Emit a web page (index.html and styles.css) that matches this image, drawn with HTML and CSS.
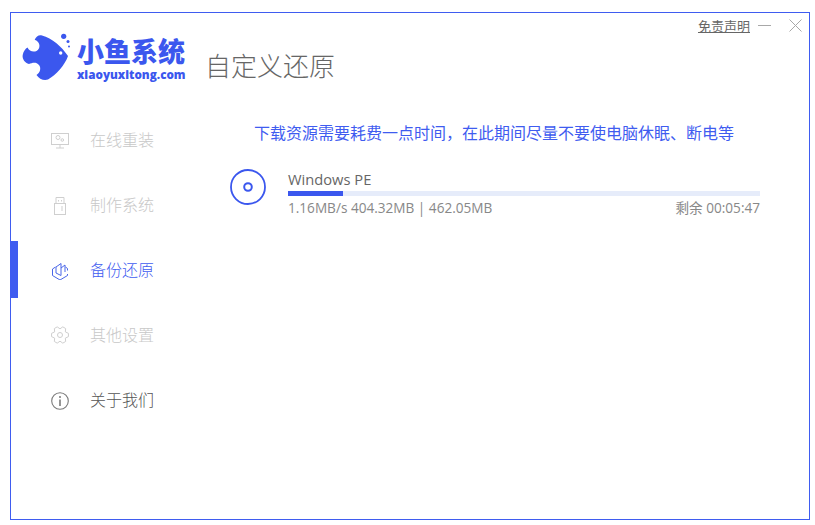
FILE: index.html
```html
<!DOCTYPE html>
<html lang="zh-CN">
<head>
<meta charset="utf-8">
<title>小鱼系统</title>
<link rel="stylesheet" href="styles.css">
</head>
<body>
<div class="window">
  <div class="topbar">
    <a class="disclaimer">免责声明</a>
    <svg class="win-btn min" width="13" height="13" viewBox="0 0 13 13"><path d="M0 6.500H13" stroke="#a8a8a8" stroke-width="1"/></svg>
    <svg class="win-btn close" width="13" height="13" viewBox="0 0 13 13"><path d="M.5.5l12 12M12.500.5l-12 12" stroke="#a8a8a8" stroke-width="1" fill="none"/></svg>
  </div>
  <header class="header">
    <svg class="fish" width="48" height="50" viewBox="0 0 48 50">
      <path fill="#3b57ee" d="M12.700 6.700C14 3.500 17 1.500 20 2.500C30 5 40 14 46 23C43 32 34 42 26 46.500C22 48 17 46 14.500 42C18 40 19.500 35 17 32C14 28.500 10 30 7 31C3 30 0 26 .7 22C1.500 18 3.500 15.500 5.500 14.500C7 18 11 19.500 14.500 18C18.500 16 19 9 12.700 6.700Z"/>
      <circle cx="41.700" cy="3.300" r="2.600" fill="#3b57ee"/>
      <circle cx="46" cy="8.500" r="1.500" fill="#3b57ee"/>
      <circle cx="47" cy="13.500" r="1" fill="#3b57ee"/>
      <circle cx="38.700" cy="20" r="1.700" fill="#fff"/>
    </svg>
    <div class="brand">
      <div class="brand-name">小鱼系统</div>
      <div class="brand-url">xiaoyuxitong.com</div>
    </div>
    <h1 class="page-title">自定义还原</h1>
  </header>
  <div class="body">
    <nav class="sidebar">
      <div class="nav-item muted">
        <svg class="nav-icon" width="18" height="18" viewBox="0 0 18 18" fill="none" stroke="#cfcfcf"><rect x=".5" y="2.500" width="17" height="11"/><circle cx="7" cy="6.500" r="2"/><circle cx="11.300" cy="9" r="1.300"/><path d="M9 13.500V17M5 17H13"/></svg>
        <span>在线重装</span>
      </div>
      <div class="nav-item muted">
        <svg class="nav-icon" width="18" height="20" viewBox="0 0 18 20" fill="none" stroke="#cfcfcf"><rect x="3.500" y="8.500" width="11" height="11"/><path d="M5 8.500V2.500H13V8.500M7.500 5V6.500M10.500 5V6.500M11 11V16"/></svg>
        <span>制作系统</span>
      </div>
      <div class="nav-item active">
        <svg class="nav-icon icon-wide" width="20" height="20" viewBox="0 0 20 20" fill="none" stroke="#4a66e8" stroke-width="1"><path d="M5.500 7L2.500 9V15.500L10 20L17.500 15.500V14M17.500 10.500V8.500L15.500 7"/><path d="M6 13V7L11 3.500V15.500L6 13ZM11 8L15 5V12"/></svg>
        <span>备份还原</span>
      </div>
      <div class="nav-item muted">
        <svg class="nav-icon" width="18" height="18" viewBox="0 0 18 18" fill="none" stroke="#cfcfcf"><path d="M17.440 7.360V10.640L14.370 12.100L14.640 15.490L11.800 17.130L9 15.200L6.200 17.130L3.360 15.490L3.630 12.100L.56 10.640V7.360L3.630 5.900L3.360 2.510L6.200 .87L9 2.800L11.800 .87L14.640 2.510L14.370 5.900Z" stroke-linejoin="round"/><circle cx="9" cy="9" r="2.500"/></svg>
        <span>其他设置</span>
      </div>
      <div class="nav-item about">
        <svg class="nav-icon icon-low" width="18" height="18" viewBox="0 0 18 18" fill="none" stroke="#7a7a7a"><circle cx="9" cy="9" r="8.300" stroke-width="1.100"/><path d="M9 7.500V14" stroke-width="1.600"/><circle cx="9" cy="4.900" r="1" fill="#7a7a7a" stroke="none"/></svg>
        <span>关于我们</span>
      </div>
    </nav>
    <main class="content">
      <p class="notice">下载资源需要耗费一点时间，在此期间尽量不要使电脑休眠、断电等</p>
      <div class="task">
        <svg class="disc" width="36" height="36" viewBox="0 0 36 36" fill="none" stroke="#3b57ee"><circle cx="18" cy="18" r="17" stroke-width="1.800"/><circle cx="18" cy="18" r="3.800" stroke-width="2"/></svg>
        <div class="task-info">
          <div class="task-name">Windows PE</div>
          <div class="track"><div class="fill" style="width:11.700%"></div></div>
          <div class="task-meta">
            <span>1.16MB/s 404.32MB | 462.05MB</span>
            <span>剩余 00:05:47</span>
          </div>
        </div>
      </div>
    </main>
  </div>
</div>
</body>
</html>
```
FILE: styles.css
```css
* { box-sizing: border-box; }
html, body { margin: 0; padding: 0; height: 100%; background: #fff; overflow: hidden; }
body {
  padding: 12px 5px 5px 10px;
  font-family: "Noto Sans CJK SC", "Open Sans", sans-serif;
  color: #666;
}
.window {
  width: 800px;
  height: 508px;
  border: 1px solid #3f5cf0;
  background: #fff;
  display: flex;
  flex-direction: column;
}
.topbar {
  height: 27px;
  display: flex;
  align-items: center;
  justify-content: flex-end;
  padding: 0 7px 2px 0;
}
.disclaimer {
  font-size: 13px;
  line-height: 18px;
  color: #666;
  text-decoration: underline;
}
.win-btn { display: block; flex: none; }
.min { margin-left: 8px; }
.close { margin-left: 18px; }
.header {
  height: 71px;
  display: flex;
  align-items: flex-start;
  padding-left: 11px;
}
.fish { flex: none; margin-top: -7px; }
.brand { margin-left: 7px; width: 120px; }
.brand-name {
  font-size: 27px;
  line-height: 28px;
  font-weight: 900;
  color: #3b57ee;
  white-space: nowrap;
  margin-top: -3px;
}
.brand-url {
  font-family: "Open Sans", sans-serif;
  font-size: 11.700px;
  line-height: 13px;
  font-weight: 800;
  color: #3b57ee;
  white-space: nowrap;
  margin-top: 3px;
}
.page-title {
  margin: 7px 0 0 8px;
  font-size: 26px;
  line-height: 36px;
  font-weight: 300;
  color: #666;
  white-space: nowrap;
}
.body { flex: 1; display: flex; min-height: 0; }
.sidebar {
  width: 218px;
  flex: none;
  display: flex;
  flex-direction: column;
  gap: 8px;
}
.nav-item {
  height: 57px;
  display: flex;
  align-items: center;
  padding-left: 33px;
  font-size: 16px;
  font-weight: 300;
  border-left: 7px solid transparent;
}
.nav-icon { flex: none; display: block; margin-right: 21px; }
.icon-wide { margin-left: -1px; margin-right: 20px; }
.icon-low { margin-top: 2px; }
.nav-item span { white-space: nowrap; margin-bottom: 2px; }
.muted { color: #c8c8c8; }
.active { color: #3f5cf0; border-left-color: #3f5cf0; }
.about { color: #555; }
.content { flex: 1; padding: 0 49px 0 1px; min-width: 0; }
.notice {
  margin: 11px 0 0;
  padding-left: 24px;
  font-size: 16px;
  line-height: 20px;
  color: #3f5cf0;
  white-space: nowrap;
}
.task { display: flex; align-items: flex-start; margin-top: 27px; }
.disc { flex: none; display: block; }
.task-info { flex: 1; margin-left: 22px; }
.task-name {
  font-family: "Open Sans", sans-serif;
  font-size: 14.700px;
  line-height: 20px;
  color: #666;
  white-space: nowrap;
}
.track { height: 5px; background: #e6ecfa; margin-top: 2px; }
.fill { height: 100%; background: #3b57ee; }
.task-meta {
  display: flex;
  justify-content: space-between;
  font-family: "Open Sans", "Noto Sans CJK SC", sans-serif;
  font-size: 13.600px;
  line-height: 18px;
  color: #888;
  margin-top: 3px;
  white-space: nowrap;
}
```
